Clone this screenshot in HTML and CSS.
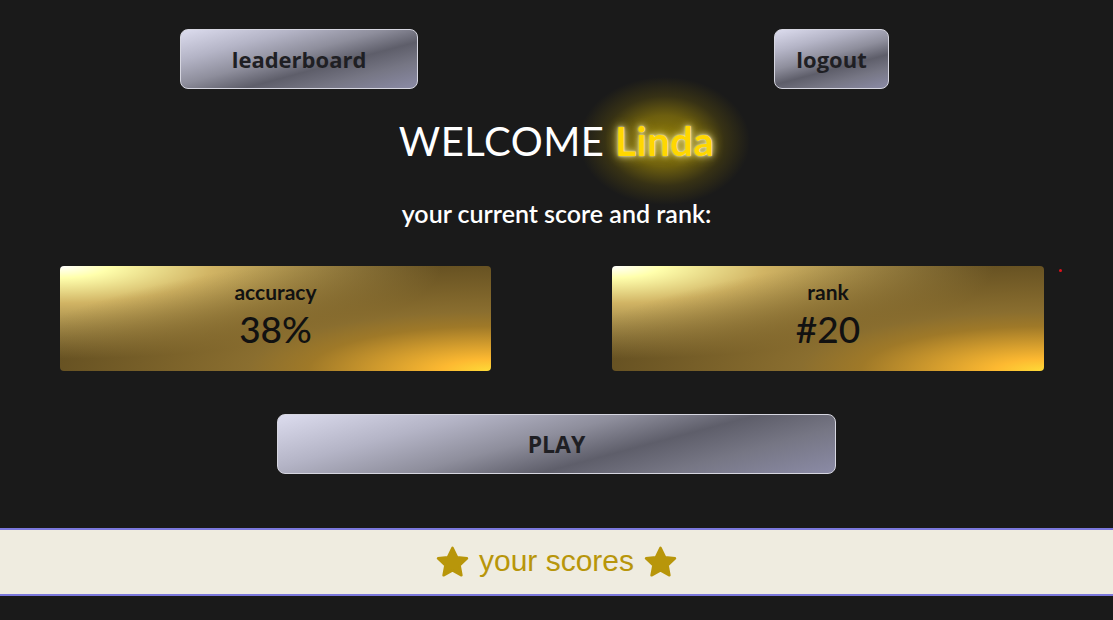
FILE: index.html
```html
<!DOCTYPE html>
<html>
<head>
<meta charset="utf-8">
<link rel="stylesheet" href="styles.css">
</head>
<body>
<div class="page">
  <header class="topbar">
    <button class="silver btn-leader">leaderboard</button>
    <button class="silver btn-logout">logout</button>
  </header>
  <h1 class="welcome">WELCOME <span class="name">Linda</span></h1>
  <p class="subtitle">your current score and rank:</p>
  <section class="cards">
    <div class="card"><div class="label">accuracy</div><div class="value">38%</div></div>
    <div class="card"><div class="label">rank</div><div class="value">#20</div></div>
    <span class="dot"></span>
  </section>
  <div class="play-row"><button class="silver btn-play">PLAY</button></div>
  <footer class="scores">
    <svg class="star" viewBox="0 0 24 24"><path d="M12 2.5l2.9 6 6.5.8-4.8 4.5 1.2 6.5L12 17.1l-5.8 3.2 1.2-6.5-4.8-4.5 6.5-.8z"/></svg>
    <span>your scores</span>
    <svg class="star" viewBox="0 0 24 24"><path d="M12 2.5l2.9 6 6.5.8-4.8 4.5 1.2 6.5L12 17.1l-5.8 3.2 1.2-6.5-4.8-4.5 6.5-.8z"/></svg>
  </footer>
</div>
</body>
</html>
```
FILE: styles.css
```css
html, body {
  margin: 0;
  padding: 0;
  background: #1a1a1a;
  height: 100%;
  overflow: hidden;
}
.page {
  font-family: Lato, "Open Sans", sans-serif;
  color: #fff;
  position: relative;
}
.topbar {
  display: flex;
  justify-content: space-between;
  padding: 29px 224px 0 180px;
}
.silver {
  font-family: "Open Sans", "Noto Sans", sans-serif;
  font-weight: 700;
  font-size: 22px;
  color: #1f1f24;
  height: 60px;
  border: 1px solid #d6d6e0;
  border-radius: 8px;
  background: linear-gradient(165deg, #dcdcee 0%, #b4b4c6 25%, #8e8e9c 45%, #5e5e6a 62%, #767684 78%, #8b8ba6 100%);
  padding: 0;
  cursor: pointer;
}
.btn-leader { width: 238px; }
.btn-logout { width: 115px; }
.welcome {
  margin: 28px 0 0;
  text-align: center;
  font-weight: 400;
  font-size: 40px;
  line-height: 48px;
  letter-spacing: 0.5px;
  position: relative;
  z-index: 0;
}
.name {
  position: relative;
  display: inline-block;
  color: #ffd700;
  font-weight: 700;
  text-shadow:
    0 0 2px rgba(255, 255, 230, 0.9),
    0 0 6px rgba(255, 250, 200, 0.8),
    0 0 12px rgba(230, 210, 60, 0.7);
}
.name::before {
  content: "";
  position: absolute;
  left: -36px;
  right: -36px;
  top: -40px;
  bottom: -40px;
  z-index: -1;
  border-radius: 50%;
  background: radial-gradient(ellipse closest-side at center, rgba(150, 130, 10, 0.95) 0%, rgba(130, 112, 12, 0.8) 40%, rgba(90, 78, 14, 0.45) 70%, rgba(26, 26, 26, 0) 100%);
}
.subtitle {
  margin: 34px 0 0;
  text-align: center;
  font-size: 25px;
  line-height: 28px;
  font-weight: 600;
}
.cards {
  position: relative;
  display: grid;
  grid-template-columns: 431px 432px;
  column-gap: 121px;
  padding-left: 60px;
  margin-top: 39px;
}
.card {
  height: 105px;
  border-radius: 4px;
  background:
    radial-gradient(ellipse farthest-corner at right bottom, #FEDB37 0%, #FDB931 8%, #9f7928 30%, #8A6E2F 40%, transparent 80%),
    radial-gradient(ellipse farthest-corner at left top, #FFFFFF 0%, #FFFFAC 8%, #D1B464 25%, #5d4a1f 62.5%, #5d4a1f 100%);
  color: #111;
  display: flex;
  flex-direction: column;
  align-items: center;
  padding-top: 14px;
  box-sizing: border-box;
}
.label {
  font-weight: 700;
  font-size: 21px;
  line-height: 24px;
}
.value {
  font-size: 37px;
  line-height: 42px;
  margin-top: 4px;
  font-weight: 500;
}
.dot {
  position: absolute;
  left: 1059px;
  top: 3px;
  width: 3px;
  height: 3px;
  border-radius: 50%;
  background: #e0121b;
}
.play-row {
  display: flex;
  padding-left: 277px;
  margin-top: 43px;
}
.btn-play {
  width: 559px;
  font-size: 23px;
}
.scores {
  margin-top: 54px;
  height: 64px;
  background: #efece0;
  border-top: 2px solid #7b78dc;
  border-bottom: 2px solid #7b78dc;
  display: flex;
  align-items: center;
  justify-content: center;
  gap: 8px;
  color: #b8960a;
  font-family: "Liberation Sans", Arial, sans-serif;
  font-size: 30px;
}
.scores span { padding-bottom: 2px; }
.star {
  width: 37px;
  height: 37px;
  fill: #b8960a;
  stroke: #b8960a;
  stroke-width: 1.6;
  stroke-linejoin: round;
}
```
